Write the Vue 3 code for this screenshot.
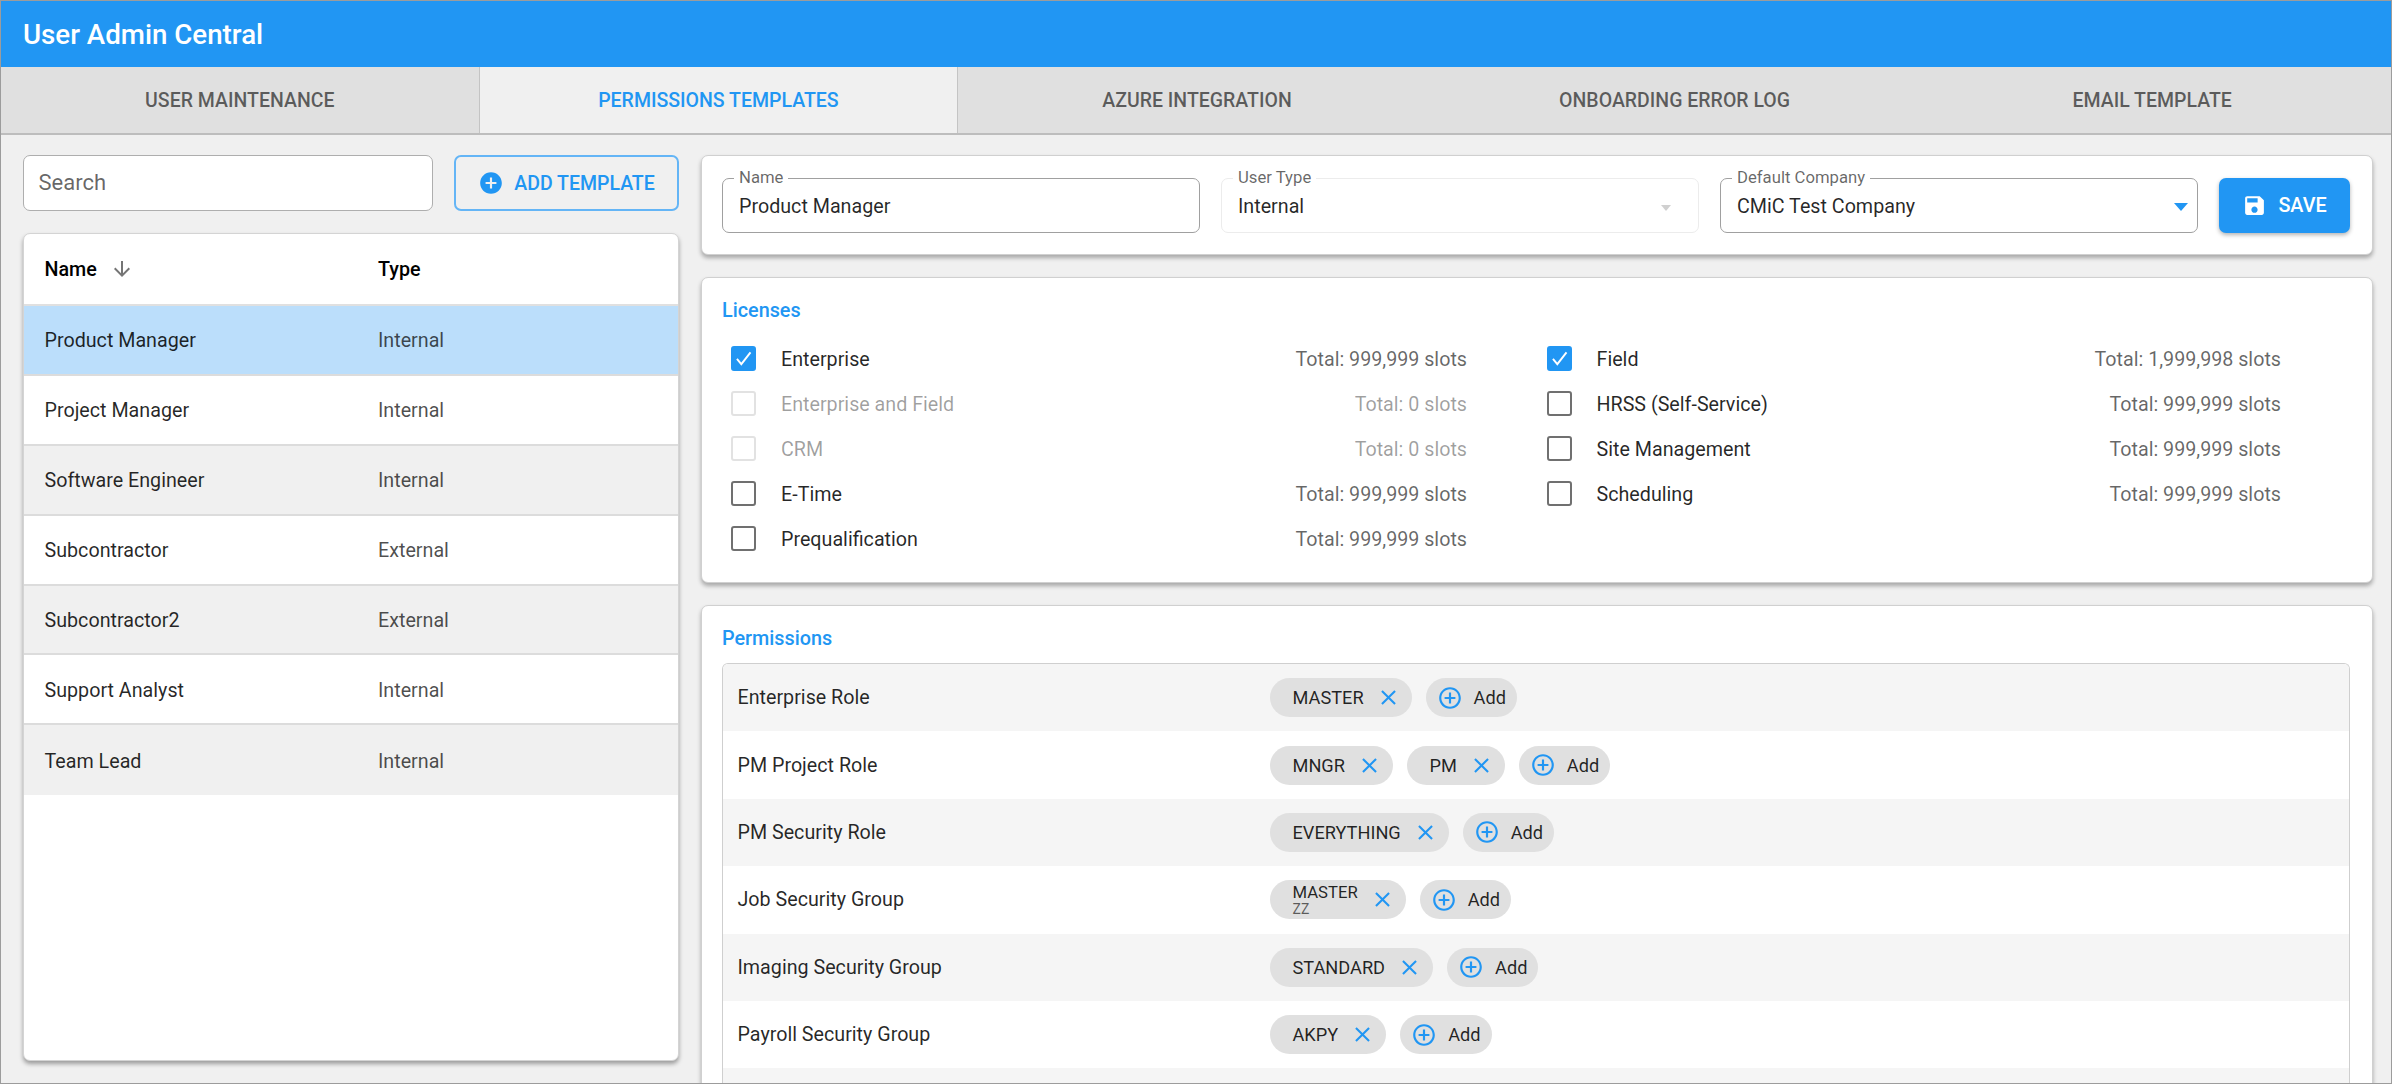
<script setup>
const tabs = ['USER MAINTENANCE', 'PERMISSIONS TEMPLATES', 'AZURE INTEGRATION', 'ONBOARDING ERROR LOG', 'EMAIL TEMPLATE']
const templates = [
  ['Product Manager', 'Internal'],
  ['Project Manager', 'Internal'],
  ['Software Engineer', 'Internal'],
  ['Subcontractor', 'External'],
  ['Subcontractor2', 'External'],
  ['Support Analyst', 'Internal'],
  ['Team Lead', 'Internal'],
]
const licenses = [
  { name: 'Enterprise', total: '999,999', checked: true },
  { name: 'Enterprise and Field', total: '0', disabled: true },
  { name: 'CRM', total: '0', disabled: true },
  { name: 'E-Time', total: '999,999' },
  { name: 'Prequalification', total: '999,999' },
  { name: 'Field', total: '1,999,998', checked: true },
  { name: 'HRSS (Self-Service)', total: '999,999' },
  { name: 'Site Management', total: '999,999' },
  { name: 'Scheduling', total: '999,999' },
]
const permissions = [
  { label: 'Enterprise Role', chips: [{ t: 'MASTER' }] },
  { label: 'PM Project Role', chips: [{ t: 'MNGR' }, { t: 'PM' }] },
  { label: 'PM Security Role', chips: [{ t: 'EVERYTHING' }] },
  { label: 'Job Security Group', chips: [{ t: 'MASTER', s: 'ZZ' }] },
  { label: 'Imaging Security Group', chips: [{ t: 'STANDARD' }] },
  { label: 'Payroll Security Group', chips: [{ t: 'AKPY' }] },
  { label: '', chips: [] },
]
</script>

<template>
  <div class="app">
    <header class="topbar">User Admin Central</header>
    <nav class="tabs">
      <div v-for="(t, i) in tabs" :key="t" class="tab" :class="{ active: i === 1, first: i === 0 }">{{ t }}</div>
    </nav>
    <main class="main">
      <section class="left">
        <div class="left-tools">
          <div class="search">Search</div>
          <button class="add-btn">
            <svg class="add-icon" viewBox="0 0 24 24"><path d="M12 2C6.48 2 2 6.48 2 12s4.48 10 10 10 10-4.48 10-10S17.52 2 12 2zm5 11h-4v4h-2v-4H7v-2h4V7h2v4h4v2z" /></svg>
            ADD TEMPLATE
          </button>
        </div>
        <div class="list-card">
          <div class="list-head">
            <div class="col-name">Name
              <svg class="sort" viewBox="0 0 24 24"><path d="M20 12l-1.41-1.41L13 16.17V4h-2v12.17l-5.58-5.59L4 12l8 8 8-8z" /></svg>
            </div>
            <div>Type</div>
          </div>
          <div v-for="(r, i) in templates" :key="r[0]" class="list-row" :class="{ selected: i === 0, stripe: i > 0 && i % 2 === 0 }">
            <div class="col-name">{{ r[0] }}</div>
            <div class="col-type">{{ r[1] }}</div>
          </div>
        </div>
      </section>

      <section class="right">
        <div class="card form-card">
          <div class="field name-field">
            <span class="legend">Name</span>
            <span class="value">Product Manager</span>
          </div>
          <div class="field type-field disabled">
            <span class="legend">User Type</span>
            <span class="value">Internal</span>
            <span class="caret"></span>
          </div>
          <div class="field company-field">
            <span class="legend">Default Company</span>
            <span class="value">CMiC Test Company</span>
            <span class="caret"></span>
          </div>
          <button class="save-btn">
            <svg class="save-icon" viewBox="0 0 24 24"><path d="M17 3H5c-1.11 0-2 .9-2 2v14c0 1.1.89 2 2 2h14c1.1 0 2-.9 2-2V7l-4-4zm-5 16c-1.66 0-3-1.34-3-3s1.34-3 3-3 3 1.34 3 3-1.34 3-3 3zm3-10H5V5h10v4z" /></svg>
            SAVE
          </button>
        </div>

        <div class="card lic-card">
          <h2 class="section-title">Licenses</h2>
          <div class="lic-grid">
            <div v-for="l in licenses" :key="l.name" class="lic-row" :class="{ off: l.disabled }">
              <span class="box" :class="{ on: l.checked }">
                <svg v-if="l.checked" viewBox="0 0 24 24"><path d="M4.5 12.5l5 6L20 5" /></svg>
              </span>
              <span class="lic-name">{{ l.name }}</span>
              <span class="lic-total">Total: {{ l.total }} slots</span>
            </div>
          </div>
        </div>

        <div class="card perm-card">
          <h2 class="section-title">Permissions</h2>
          <div class="perm-table">
            <div v-for="(p, i) in permissions" :key="i" class="perm-row">
              <div class="perm-label">{{ p.label }}</div>
              <div v-if="p.label" class="chips">
                <div v-for="c in p.chips" :key="c.t" class="chip">
                  <span v-if="c.s" class="chip-two"><span>{{ c.t }}</span><small>{{ c.s }}</small></span>
                  <span v-else>{{ c.t }}</span>
                  <svg class="x" viewBox="0 0 24 24"><path d="M19 6.41 17.59 5 12 10.59 6.41 5 5 6.41 10.59 12 5 17.59 6.41 19 12 13.41 17.59 19 19 17.59 13.41 12z" /></svg>
                </div>
                <div class="chip add">
                  <svg class="plus" viewBox="0 0 24 24"><path d="M13 7h-2v4H7v2h4v4h2v-4h4v-2h-4V7zm-1-5C6.48 2 2 6.48 2 12s4.48 10 10 10 10-4.48 10-10S17.52 2 12 2zm0 18c-4.41 0-8-3.59-8-8s3.59-8 8-8 8 3.59 8 8-3.59 8-8 8z" /></svg>
                  <span>Add</span>
                </div>
              </div>
            </div>
          </div>
        </div>
      </section>
    </main>
  </div>
</template>

<style scoped>
* { box-sizing: border-box; }
.app {
  width: 2392px;
  height: 1084px;
  overflow: hidden;
  display: flex;
  flex-direction: column;
  background: #f0f0f0;
  border: 1px solid #9c9c9c;
  font-family: Roboto, "Liberation Sans", sans-serif;
  font-size: 19.7px;
  color: rgba(0, 0, 0, 0.85);
}
.topbar {
  height: 66px;
  flex: none;
  background: #2196f3;
  color: #fff;
  font-size: 27.7px;
  font-weight: 500;
  padding-left: 22px;
  display: flex;
  align-items: center;
}
.tabs {
  height: 68px;
  flex: none;
  display: flex;
  background: #e0e0e0;
  border-bottom: 2px solid #bdbdbd;
}
.tab {
  flex: 1;
  display: flex;
  align-items: center;
  justify-content: center;
  font-size: 19.5px;
  font-weight: 500;
  color: rgba(0, 0, 0, 0.6);
}
.tab.first { border-right: 1px solid #c4c4c4; }
.tab.active { background: #f0f0f0; color: #2196f3; border-right: 1px solid #c4c4c4; }
.main {
  flex: 1;
  min-height: 0;
  display: flex;
  gap: 22px;
  padding: 20px 18px 0 22px;
}
.left {
  width: 656px;
  flex: none;
  display: flex;
  flex-direction: column;
  padding-bottom: 22px;
}
.left-tools { display: flex; gap: 21px; height: 56px; }
.search {
  width: 410px;
  background: #fff;
  border: 1.5px solid #aeaeae;
  border-radius: 7px;
  display: flex;
  align-items: center;
  padding: 0 0 2px 14.5px;
  font-size: 22px;
  color: rgba(0, 0, 0, 0.6);
}
.add-btn {
  flex: 1;
  border: 2px solid #64b5f6;
  border-radius: 7px;
  background: transparent;
  color: #2196f3;
  font: 500 19.5px Roboto, sans-serif;
  display: flex;
  align-items: center;
  justify-content: center;
  gap: 10px;
  padding: 0;
}
.add-icon { width: 26px; height: 26px; fill: #2196f3; }
.list-card {
  flex: 1;
  margin-top: 22px;
  background: #fff;
  border: 1px solid #d4d4d4;
  border-radius: 7px;
  box-shadow: 0 3px 4px rgba(0, 0, 0, 0.35);
  overflow: hidden;
}
.list-head, .list-row {
  display: grid;
  grid-template-columns: 333.5px 1fr;
  align-items: center;
  padding-left: 20.5px;
}
.list-head { height: 72px; font-weight: 500; color: #000; border-bottom: 2px solid #e0e0e0; }
.list-head .col-name { display: flex; align-items: center; gap: 13px; }
.sort { width: 24px; height: 24px; fill: #757575; }
.list-row { height: 69.9px; padding-top: 1.5px; border-bottom: 2px solid #dcdcdc; }
.list-row:last-child { border-bottom: none; }
.list-row.selected { background: #bbdefb; }
.list-row.stripe { background: #f0f0f0; }
.col-type { color: rgba(0, 0, 0, 0.7); }
.right {
  flex: 1;
  min-width: 0;
  display: flex;
  flex-direction: column;
  gap: 22px;
}
.card {
  background: #fff;
  border: 1px solid #d0d0d0;
  border-radius: 7px;
  box-shadow: 0 3px 4px rgba(0, 0, 0, 0.3);
}
.form-card {
  height: 100px;
  flex: none;
  display: flex;
  gap: 21px;
  padding: 22px 0 0 20px;
}
.field {
  position: relative;
  width: 478px;
  height: 55px;
  border: 1.5px solid #a0a0a0;
  border-radius: 7px;
  display: flex;
  align-items: center;
  padding: 1.5px 0 0 16px;
}
.field.disabled { border-color: #ececec; }
.legend {
  position: absolute;
  left: 11px;
  top: -11px;
  background: #fff;
  padding: 0 5px;
  font-size: 16.7px;
  line-height: 20px;
  color: rgba(0, 0, 0, 0.6);
}
.caret {
  position: absolute;
  right: 9px;
  top: 24px;
  border-left: 7px solid transparent;
  border-right: 7px solid transparent;
  border-top: 8px solid #2196f3;
}
.disabled .caret { border-top-color: #d0d0d0; right: 27px; top: 26px; border-left-width: 5px; border-right-width: 5px; border-top-width: 6px; }
.save-btn {
  width: 131px;
  height: 55px;
  background: #2196f3;
  border: none;
  border-radius: 7px;
  color: #fff;
  font: 500 19.8px Roboto, sans-serif;
  display: flex;
  align-items: center;
  justify-content: center;
  gap: 11px;
  box-shadow: 0 2px 4px rgba(0, 0, 0, 0.3);
}
.save-icon { width: 25px; height: 25px; fill: #fff; }
.lic-card { height: 306px; flex: none; padding: 22px 0 0 20px; }
.section-title {
  margin: 0;
  font-size: 19.8px;
  font-weight: 500;
  line-height: 22px;
  color: #2196f3;
}
.lic-grid {
  margin-top: 14px;
  padding-left: 9px;
  display: grid;
  grid-template-rows: repeat(5, 45px);
  grid-auto-flow: column;
  grid-template-columns: 736px 734.5px;
  column-gap: 79.5px;
}
.lic-row { display: flex; align-items: center; }
.lic-name, .lic-total { padding-top: 1.5px; }
.box {
  width: 25px;
  height: 25px;
  flex: none;
  border: 2.5px solid #707070;
  border-radius: 3px;
  margin-right: 25px;
}
.box.on { background: #2196f3; border-color: #2196f3; }
.box svg { display: block; width: 100%; height: 100%; fill: none; stroke: #fff; stroke-width: 2.2; }
.lic-total { margin-left: auto; color: rgba(0, 0, 0, 0.6); }
.off .box { border-color: #e2e2e2; }
.off .lic-name, .off .lic-total { color: rgba(0, 0, 0, 0.38); }
.perm-card { flex: 1; min-height: 600px; padding: 22px 22px 0 20px; }
.perm-table {
  margin-top: 13px;
  border: 1px solid #cfcfcf;
  border-bottom: none;
  border-radius: 6px 6px 0 0;
  overflow: hidden;
}
.perm-row {
  height: 67.4px;
  display: grid;
  grid-template-columns: 547px 1fr;
  align-items: center;
  padding-left: 14px;
}
.perm-row:nth-child(odd) { background: #f5f5f5; }
.perm-label { padding-left: 0.5px; }
.chips { display: flex; gap: 14px; margin-left: -14px; }
.chip {
  height: 39px;
  border-radius: 20px;
  background: #e0e0e0;
  display: flex;
  align-items: center;
  padding: 0 11px 0 22.5px;
  gap: 12px;
  font-size: 18.2px;
}
.chip-two { display: flex; flex-direction: column; font-size: 16.7px; line-height: 18px; }
.chip-two small { font-size: 14px; line-height: 14px; color: rgba(0, 0, 0, 0.6); }
.x { width: 25px; height: 25px; fill: #2196f3; }
.chip.add { padding: 0 11px 0 11px; gap: 11px; }
.plus { width: 26px; height: 26px; fill: #2196f3; }
</style>

<style>
body { margin: 0; }
</style>
